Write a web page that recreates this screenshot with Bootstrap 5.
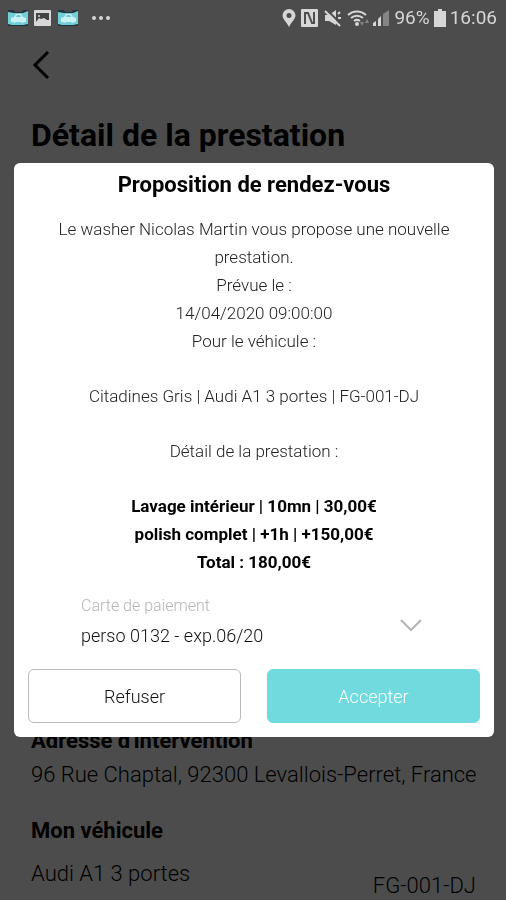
<!DOCTYPE html>
<html lang="fr">
<head>
<meta charset="utf-8">
<meta name="viewport" content="width=device-width, initial-scale=1">
<title>Détail de la prestation</title>
<link href="https://cdn.jsdelivr.net/npm/bootstrap@5.3.0/dist/css/bootstrap.min.css" rel="stylesheet">
<style>
body { font-family: Roboto, "Liberation Sans", sans-serif; font-weight: 300; color: #000; }
.screen { min-height: 100vh; }
/* status bar stays above the modal backdrop */
.status-bar { z-index: 1060; height: 36px; padding: 0 9px 0 7px; color: #d6d6d6; font-size: 19px; font-weight: 400; }
.modal-backdrop { --bs-backdrop-opacity: .7; }
.back-btn { width: 32px; height: 40px; margin: 9px 0 0 25px; }
.page-title { font-size: 32px; line-height: 40px; margin: 30px 0 0; }
.page-body { padding: 0 20px 0 31px; }
.section-title { font-size: 22px; line-height: 28px; margin: 0; }
.info-line { font-size: 22px; line-height: 28px; }
.address { margin-top: 6px; }
.vehicle-row { height: 40px; margin: 15px 10px 0 0; }
.modal-dialog { max-width: 480px; margin: 0 12px 0 14px; min-height: 100vh; }
.modal-content { border: 0; border-radius: 6px; color: #000; }
.offer-title { font-size: 22px; line-height: 28px; margin: 8px 0 16px; }
.offer-text { font-size: 17px; line-height: 28px; color: #222; padding: 0 28px; }
.offer-text p { margin: 0 0 27px; }
.offer-text .services { color: #000; margin-bottom: 16px; }
.payment { margin: 0 67px; }
.payment label { font-size: 16px; line-height: 28px; color: #b4b4b4; }
.payment .form-select { font-size: 18px; font-weight: 300; line-height: 28px; padding: 2px 48px 2px 0; background: none; color: #111; }
.payment svg { right: 4px; top: 26px; pointer-events: none; }
.actions { gap: 26px; padding: 17px 14px 14px; }
.actions .btn { height: 54px; font-size: 18px; font-weight: 300; border-radius: 6px; }
.btn-refuse { border-color: #bbb; color: #111; background: #fff; }
.btn-accept { border-color: #70dade; color: #fff; background: #70dade; }
</style>
<script src="https://cdn.jsdelivr.net/npm/bootstrap@5.3.0/dist/js/bootstrap.bundle.min.js"></script>
</head>
<body class="bg-white overflow-hidden">
<svg class="d-none" aria-hidden="true">
  <symbol id="car-app" viewBox="0 0 22 18">
    <path d="M1 1h6l1 2h7l1-2h5v16H1z" fill="#22323f"/>
    <path d="M1 3l6 1h9l5-2v13l-5 1H5l-4-1z" fill="#72cfd6"/>
    <path d="M4 12V9l3-1 2-3h5l2 3 3 1v4h-2a2 2 0 0 1-3 0h-5a2 2 0 0 1-3 0H4z" fill="#c9f1f3"/>
    <path d="M9 8l1-2h3l1 2z" fill="#6fc5cd"/>
  </symbol>
</svg>

<div class="screen d-flex flex-column">
  <div class="status-bar position-relative d-flex align-items-center justify-content-between">
    <div class="d-flex align-items-center">
      <svg width="22" height="18"><use href="#car-app"/></svg>
      <svg class="ms-1" width="20" height="18" viewBox="0 0 20 18"><rect x="1" y="1" width="17" height="16" rx="1" fill="#d8d8d8"/><path d="M3 4h13v7h-2l-3-2-3 1-2-1-3 4z" fill="#444"/><circle cx="6" cy="7" r="1" fill="#d8d8d8"/></svg>
      <svg class="ms-1" width="22" height="18"><use href="#car-app"/></svg>
      <svg class="ms-2" width="26" height="18" viewBox="0 0 26 18" fill="#d6d6d6"><circle cx="7" cy="9" r="2"/><circle cx="14" cy="9" r="2"/><circle cx="21" cy="9" r="2"/></svg>
    </div>
    <div class="d-flex align-items-center">
      <svg width="14" height="18" viewBox="0 0 14 18" fill="#d6d6d6"><path fill-rule="evenodd" d="M7 0a6.500 6.500 0 0 1 6.500 6.500C13.500 10 9.500 13 7 18 4.500 13 .5 10 .5 6.500A6.500 6.500 0 0 1 7 0zM7 4a2.500 2.500 0 1 0 0 5 2.500 2.500 0 0 0 0-5z"/></svg>
      <svg class="ms-1" width="20" height="18" viewBox="0 0 20 18"><rect x="1" y="0" width="17" height="18" rx="1" fill="#d6d6d6"/><path d="M5 15V4l3 0 4 10h2V3" fill="none" stroke="#4c4c4c" stroke-width="2"/></svg>
      <svg class="ms-1" width="18" height="18" viewBox="0 0 18 18"><path d="M1 6h4l7-5v15l-7-4H1z" fill="#d6d6d6"/><path d="M3 1l14 14" stroke="#4c4c4c" stroke-width="2"/><path d="M1 2l15 15M14 9h3M14 5l2-2" stroke="#d6d6d6" stroke-width="2"/></svg>
      <svg class="ms-1" width="26" height="20" viewBox="0 0 26 20" fill="none"><path d="M2 7a13 13 0 0 1 18 0M5 10a9 9 0 0 1 12 0M8 13a5 5 0 0 1 6 0" stroke="#d6d6d6" stroke-width="2"/><circle cx="11" cy="16" r="2" fill="#d6d6d6"/><path d="M14 14l2 4 2-4zM19 15l2-4 2 4z" fill="#858585"/></svg>
      <svg width="18" height="18" viewBox="0 0 18 18"><path d="M1 17v-3l3-2v5zM6 17V10l3-3v10z" fill="#d6d6d6"/><path d="M11 17V5l6-4v16z" fill="#858585"/></svg>
      <span class="ms-1">96%</span>
      <svg class="ms-1" width="12" height="18" viewBox="0 0 12 18" fill="#d6d6d6"><path d="M4 0h4v2h4v16H0V2h4z"/></svg>
      <span class="ms-1">16:06</span>
    </div>
  </div>

  <button type="button" class="back-btn btn p-0 border-0 d-flex align-items-center justify-content-center" aria-label="Retour">
    <svg width="18" height="30" viewBox="0 0 18 30" fill="none" stroke="#000" stroke-width="3"><path d="M16 2L3 15l13 13"/></svg>
  </button>

  <main class="page-body d-flex flex-column flex-grow-1">
    <h1 class="page-title fw-bold">Détail de la prestation</h1>
    <section class="mt-auto">
      <h2 class="section-title fw-bold">Adresse d'intervention</h2>
      <div class="info-line address">96 Rue Chaptal, 92300 Levallois-Perret, France</div>
    </section>
    <section class="mt-4 pt-1">
      <h2 class="section-title fw-bold">Mon véhicule</h2>
      <div class="vehicle-row info-line d-flex justify-content-between align-items-start">
        <span>Audi A1 3 portes</span>
        <span class="mt-2 pt-1">FG-001-DJ</span>
      </div>
    </section>
  </main>
</div>

<div class="modal-backdrop show"></div>
<div class="modal d-block" role="dialog" aria-modal="true" aria-labelledby="offer-title">
  <div class="modal-dialog modal-dialog-centered">
    <div class="modal-content">
      <h2 id="offer-title" class="offer-title fw-bold text-center">Proposition de rendez-vous</h2>
      <div class="offer-text text-center">
        <p>Le washer Nicolas Martin vous propose une nouvelle prestation.<br>Prévue le :<br>14/04/2020 09:00:00<br>Pour le véhicule :</p>
        <p>Citadines Gris | Audi A1 3 portes | FG-001-DJ</p>
        <p>Détail de la prestation :</p>
        <p class="services fw-bold">Lavage intérieur | 10mn | 30,00€<br>polish complet | +1h | +150,00€<br>Total : 180,00€</p>
      </div>
      <div class="payment position-relative">
        <label for="card">Carte de paiement</label>
        <select id="card" class="form-select border-0"><option>perso 0132 - exp.06/20</option></select>
        <svg class="position-absolute" width="24" height="14" viewBox="0 0 24 14" fill="none" stroke="#b4b4b4" stroke-width="2"><path d="M2 2l10 10L22 2"/></svg>
      </div>
      <div class="actions d-flex">
        <button type="button" class="btn btn-refuse flex-fill w-50">Refuser</button>
        <button type="button" class="btn btn-accept flex-fill w-50">Accepter</button>
      </div>
    </div>
  </div>
</div>
</body>
</html>
